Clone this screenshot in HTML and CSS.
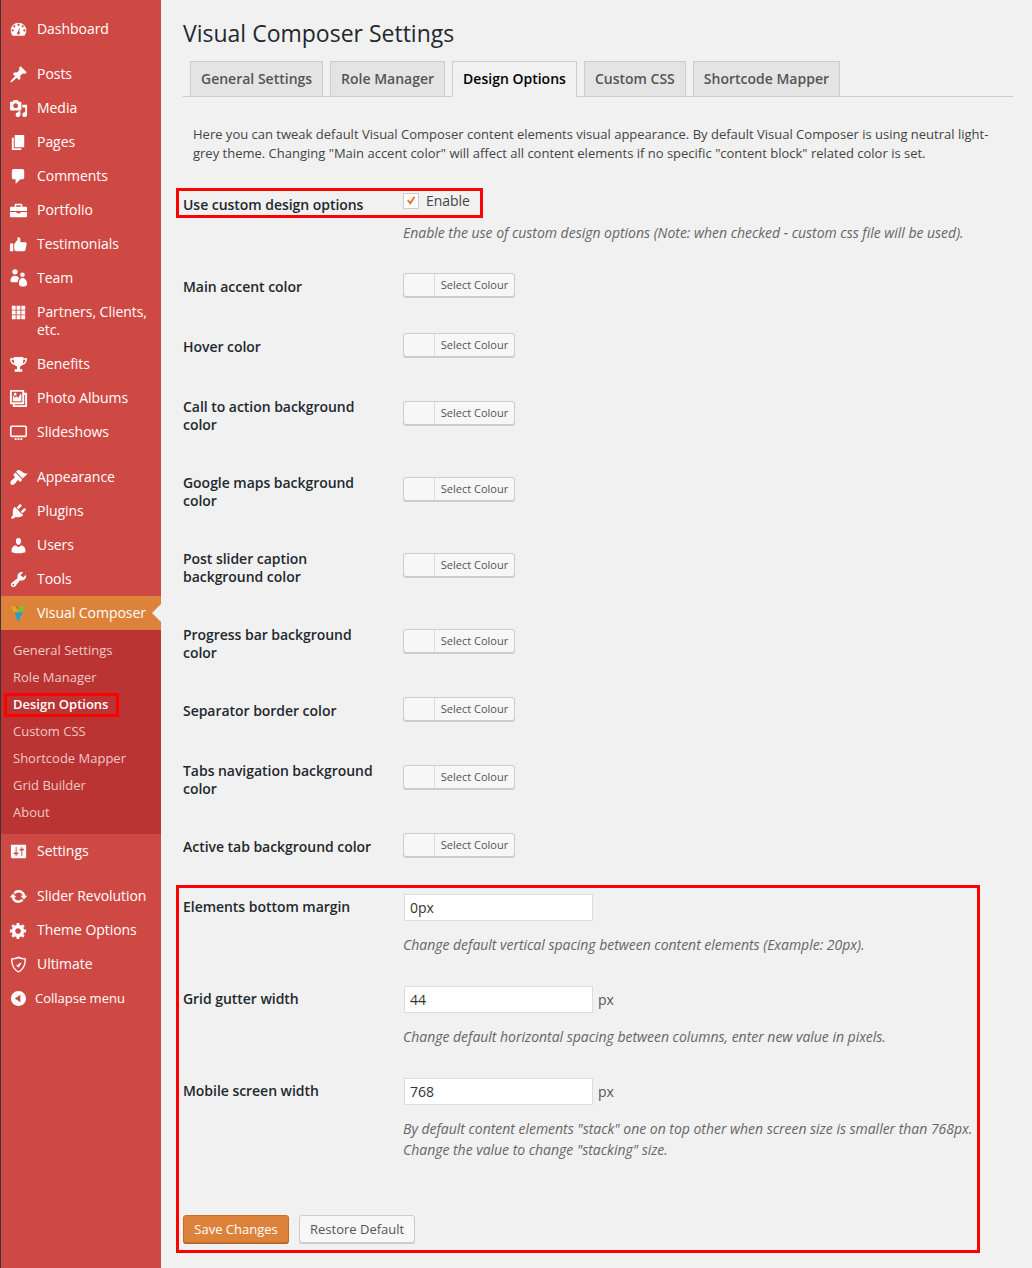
FILE: index.html
```html
<!DOCTYPE html>
<html lang="en">
<head>
    <meta charset="UTF-8">
    <title>Visual Composer Settings</title>
    <link rel="stylesheet" href="styles.css">
</head>
<body>
    <nav class="sidebar">
        <ul class="menu">
            <li class="item"><svg class="ico" viewBox="0 0 20 20"><path fill-rule="evenodd" d="M3.76 16.5h12.48A8 8 0 0 0 18.2 11 8.2 8.2 0 0 0 1.8 11a8 8 0 0 0 1.96 5.500zM10 3.800a1.200 1.200 0 1 1 0 2.400 1.200 1.200 0 0 1 0-2.400zM5.600 5.500a1.200 1.200 0 1 1 0 2.400 1.200 1.200 0 0 1 0-2.400zM14.400 5.500a1.200 1.200 0 1 1 0 2.400 1.200 1.200 0 0 1 0-2.400zM3.800 9.800a1.200 1.200 0 1 1 0 2.400 1.200 1.200 0 0 1 0-2.400zM16.200 9.800a1.200 1.200 0 1 1 0 2.400 1.200 1.200 0 0 1 0-2.400zM11.500 7.500l-.6 5a1.500 1.500 0 1 1-1.800 0z"/></svg>Dashboard</li>
            <li class="gap"></li>
            <li class="item"><svg class="ico" viewBox="0 0 20 20"><path d="M10.44 3.020l1.820-1.820 6.360 6.350-1.830 1.820c-1.050-.68-2.480-.57-3.410.36l-.75.75c-.92.93-1.040 2.350-.35 3.410l-1.830 1.820-2.410-2.410-2.800 2.790c-.42.42-3.380 2.710-3.800 2.290s1.860-3.390 2.280-3.810l2.790-2.790L4.100 9.360l1.830-1.820c1.050.69 2.480.57 3.400-.36l.75-.75c.93-.92 1.050-2.350.36-3.410z"/></svg>Posts</li>
            <li class="item"><svg class="ico" viewBox="0 0 20 20"><path fill-rule="evenodd" d="M13 11V4c0-.55-.45-1-1-1h-1.670L9 1H5L3.670 3H2c-.55 0-1 .45-1 1v7c0 .55.45 1 1 1h10c.55 0 1-.45 1-1zM7 4.500c1.380 0 2.500 1.120 2.500 2.500S8.380 9.500 7 9.500 4.500 8.380 4.500 7 5.620 4.500 7 4.500zM14 6h5v10.500c0 1.380-1.120 2.500-2.500 2.500S14 17.880 14 16.500s1.120-2.500 2.500-2.500c.17 0 .34.020.5.050V9h-3V6zm-4 8.050V13h2v3.500c0 1.380-1.120 2.500-2.500 2.500S7 17.880 7 16.500 8.120 14 9.500 14c.17 0 .34.020.5.050z"/></svg>Media</li>
            <li class="item"><svg class="ico" viewBox="0 0 20 20"><path d="M6 15V2h10v13H6zm-1 1h8v2H3V5h2v11z"/></svg>Pages</li>
            <li class="item"><svg class="ico" viewBox="0 0 20 20"><path d="M5 2h9c1.100 0 2 .9 2 2v7c0 1.100-.9 2-2 2h-2l-5 5v-5H5c-1.100 0-2-.9-2-2V4c0-1.100.9-2 2-2z"/></svg>Comments</li>
            <li class="item"><svg class="ico" viewBox="0 0 20 20"><path fill-rule="evenodd" d="M7 3h6a1 1 0 0 1 1 1v2h4a1 1 0 0 1 1 1v3.500H1V7a1 1 0 0 1 1-1h4V4a1 1 0 0 1 1-1zm.5 1.500V6h5V4.500h-5zM1 11.500h7V13h4v-1.500h7V16a1 1 0 0 1-1 1H2a1 1 0 0 1-1-1v-4.500z"/></svg>Portfolio</li>
            <li class="item"><svg class="ico" viewBox="0 0 20 20"><path d="M1 9h3.500v8H1zM5.500 9.500L9 5V2c1.800 0 3 1 3 3v2.500h5c1.200 0 1.900 1 1.600 2l-1.400 6.200c-.2.8-.9 1.300-1.700 1.300H8c-1.300 0-2.500-1-2.500-2.500z"/></svg>Testimonials</li>
            <li class="item"><svg class="ico" viewBox="0 0 20 20"><path d="M6.300.2a2.800 2.800 0 1 1 0 5.600 2.800 2.800 0 0 1 0-5.600zM14.200 3.600a2.400 2.400 0 1 1 0 4.800 2.400 2.400 0 0 1 0-4.800zM1.600 12c0-3 2-5 4.600-5s4.200 1.500 4.500 3c-1 1-1.500 2.500-1.500 4H3c-1 0-1.400-1-1.400-2zM10.500 16c0-4 1-6.500 3.700-6.500s4.800 2.500 4.800 6.500c0 1.500-2 2.500-4.300 2.500s-4.200-1-4.200-2.500z"/></svg>Team</li>
            <li class="item item-tall"><svg class="ico" viewBox="0 0 20 20"><path d="M3 3h4v4H3zM8 3h4v4H8zM13 3h4v4h-4zM3 8h4v4H3zM8 8h4v4H8zM13 8h4v4h-4zM3 13h4v4H3zM8 13h4v4H8zM13 13h4v4h-4z"/></svg><span>Partners, Clients, etc.</span></li>
            <li class="item"><svg class="ico" viewBox="0 0 20 20"><path fill-rule="evenodd" d="M5 2h10v1.500h4c0 4-1.500 6.500-5 7-.6.9-1.500 1.500-2.500 1.700V15H14v2.500H6V15h2.500v-2.800c-1-.2-1.900-.8-2.500-1.700-3.500-.5-5-3-5-7h4V2zM2.700 5c.2 2 1 3.300 2.700 3.800C5.100 7.700 5 6.400 5 5H2.700zM15 5c0 1.400-.1 2.700-.4 3.800 1.700-.5 2.500-1.800 2.700-3.800H15z"/></svg>Benefits</li>
            <li class="item"><svg class="ico" viewBox="0 0 20 20"><path fill-rule="evenodd" d="M16 4h1.960c.57 0 1.040.47 1.040 1.040v12.920c0 .57-.47 1.040-1.040 1.040H5.040C4.470 19 4 18.530 4 17.960V16H2.040C1.470 16 1 15.530 1 14.960V2.040C1 1.470 1.470 1 2.040 1h12.920c.57 0 1.040.47 1.040 1.040V4zM3 14h11V3H3v11zm5-8.500C8 4.670 7.330 4 6.500 4S5 4.670 5 5.500 5.670 7 6.500 7 8 6.330 8 5.500zm2 4.500s1-5 3-5v8H4V7c2 0 2 3 2 3s.33-2 2-2 2 2 2 2zm7 7V6h-1v8.960c0 .57-.47 1.040-1.040 1.040H6v1h11z"/></svg>Photo Albums</li>
            <li class="item"><svg class="ico" viewBox="0 0 20 20"><path fill-rule="evenodd" d="M3 2.500h14a2 2 0 0 1 2 2V13a2 2 0 0 1-2 2H3a2 2 0 0 1-2-2V4.500a2 2 0 0 1 2-2zM3 4.300a.3.3 0 0 0-.3.3v8.300a.3.3 0 0 0 .3.3h14a.3.3 0 0 0 .3-.3V4.600a.3.3 0 0 0-.3-.3H3zM6 16h2v2H6zM9 16h2v2H9zM12 16h2v2h-2z"/></svg>Slideshows</li>
            <li class="gap"></li>
            <li class="item"><svg class="ico" viewBox="0 0 20 20"><path d="M14.480 11.060L7.410 3.990l1.500-1.500c.5-.56 2.300-.47 3.510.32 1.210.8 1.430 1.280 2.910 2.100 1.180.64 2.450 1.260 4.450.85zm-.71.71L6.700 4.700 4.930 6.470c-.39.39-.39 1.020 0 1.410l1.060 1.060c.39.39.39 1.030 0 1.420-.6.6-1.430 1.110-2.210 1.690-.35.26-.7.53-1.010.84-1.340 1.340-1.810 3.270-.77 4.310s2.960.57 4.310-.77c.31-.31.58-.66.84-1.010.58-.78 1.090-1.610 1.690-2.210.39-.39 1.020-.39 1.410 0l1.060 1.060c.39.39 1.020.39 1.410 0z"/></svg>Appearance</li>
            <li class="item"><svg class="ico" viewBox="0 0 20 20"><path d="M13.110 4.360L9.870 7.600 8 5.730l3.240-3.240c.35-.34 1.050-.2 1.560.32.52.51.66 1.210.31 1.550zm-8 1.770l.91-1.120 9.010 9.010-1.190.84c-.71.71-2.630 1.160-3.820 1.160H6.140L4.900 17.260c-.59.59-1.540.59-2.120 0-.59-.58-.59-1.530 0-2.120l1.240-1.240v-3.880c0-1.130.4-3.190 1.090-3.890zm7.260 3.970l3.240-3.240c.34-.35 1.040-.21 1.550.31.52.51.66 1.210.31 1.550l-3.240 3.250z"/></svg>Plugins</li>
            <li class="item"><svg class="ico" viewBox="0 0 20 20"><path d="M10 9.250c-2.270 0-2.730-3.440-2.730-3.440C7 4.020 7.820 2 9.970 2c2.160 0 2.980 2.020 2.710 3.810 0 0-.41 3.440-2.680 3.440zm0 2.570L12.720 10c2.390 0 4.520 2.330 4.520 4.530v2.490s-3.650 1.130-7.240 1.130c-3.650 0-7.240-1.130-7.240-1.130v-2.490c0-2.250 1.940-4.480 4.470-4.480z"/></svg>Users</li>
            <li class="item"><svg class="ico" viewBox="0 0 20 20"><path fill-rule="evenodd" d="M16.680 9.770c-1.340 1.340-3.300 1.670-4.950.99l-5.410 6.520c-.99.99-2.590.99-3.580 0s-.99-2.590 0-3.570l6.520-5.420c-.68-1.650-.35-3.610.99-4.950 1.280-1.280 3.120-1.620 4.720-1.060l-2.890 2.890 2.820 2.820 2.860-2.870c.53 1.580.18 3.390-1.080 4.650zM3.810 16.210c.4.39 1.040.39 1.430 0 .4-.4.4-1.040 0-1.430-.39-.4-1.030-.4-1.430 0-.39.39-.39 1.030 0 1.430z"/></svg>Tools</li>
            <li class="item item-current"><svg class="ico" viewBox="0 0 20 20"><path fill="#efa522" d="M2 2.500h6l1.500 5.500-4 1z"/><path fill="#dd5a2c" d="M6.500 2.500H10L9 6z"/><path fill="#7fbb3a" d="M10 2.500h7.500L14 9h-4.500z"/><path fill="#1c9fdc" d="M6 9h9l-4 5v4.500l-3-3z"/></svg>Visual Composer</li>
            <li class="submenu">
                <ul>
                    <li class="sub-item">General Settings</li>
                    <li class="sub-item">Role Manager</li>
                    <li class="sub-item sub-current">Design Options</li>
                    <li class="sub-item">Custom CSS</li>
                    <li class="sub-item">Shortcode Mapper</li>
                    <li class="sub-item">Grid Builder</li>
                    <li class="sub-item">About</li>
                </ul>
            </li>
            <li class="item"><svg class="ico" viewBox="0 0 20 20"><path fill-rule="evenodd" d="M18 16V4c0-.55-.45-1-1-1H3c-.55 0-1 .45-1 1v12c0 .55.45 1 1 1h14c.55 0 1-.45 1-1zM8 11h1c.55 0 1 .45 1 1s-.45 1-1 1H8v1.500c0 .28-.22.5-.5.5s-.5-.22-.5-.5V13H6c-.55 0-1-.45-1-1s.45-1 1-1h1V5.500c0-.28.22-.5.5-.5s.5.22.5.5V11zm5-2h-1c-.55 0-1-.45-1-1s.45-1 1-1h1V5.500c0-.28.22-.5.5-.5s.5.22.5.5V7h1c.55 0 1 .45 1 1s-.45 1-1 1h-1v5.500c0 .28-.22.5-.5.5s-.5-.22-.5-.5V9z"/></svg>Settings</li>
            <li class="gap"></li>
            <li class="item"><svg class="ico" viewBox="0 0 20 20"><path d="M10.200 3.280c3.530 0 6.430 2.610 6.920 6h2.080l-3.500 4-3.500-4h2.320c-.45-1.970-2.210-3.450-4.320-3.450-1.450 0-2.730.71-3.540 1.780L4.950 5.660C6.230 4.200 8.110 3.280 10.200 3.280zm-.4 13.440c-3.520 0-6.430-2.610-6.920-6H.8l3.500-4c1.170 1.330 2.330 2.670 3.500 4H5.480c.45 1.970 2.210 3.450 4.320 3.450 1.450 0 2.730-.71 3.540-1.780l1.710 1.950c-1.280 1.460-3.150 2.380-5.250 2.380z"/></svg>Slider Revolution</li>
            <li class="item"><svg class="ico" viewBox="0 0 20 20"><path fill-rule="evenodd" d="M18 12h-2.180c-.17.7-.44 1.350-.81 1.930l1.540 1.540-2.100 2.100-1.540-1.540c-.58.36-1.230.63-1.910.79V19H8v-2.180c-.68-.16-1.330-.43-1.910-.79l-1.540 1.540-2.120-2.120 1.540-1.540c-.36-.58-.63-1.230-.79-1.910H1V9.030h2.170c.16-.7.44-1.350.8-1.940L2.430 5.550l2.100-2.100 1.540 1.540c.58-.37 1.240-.64 1.930-.81V2h3v2.180c.68.16 1.330.43 1.910.79l1.540-1.540 2.120 2.120-1.540 1.540c.36.59.64 1.240.8 1.940H18V12zm-8.500 1.500c1.660 0 3-1.340 3-3s-1.340-3-3-3-3 1.340-3 3 1.340 3 3 3z"/></svg>Theme Options</li>
            <li class="item"><svg class="ico" viewBox="0 0 20 20"><path fill-rule="evenodd" d="M10 1.500c2.500 1.300 5 1.900 7.800 1.900.3 6.500-1.900 12-7.800 15.100C4.100 15.400 1.900 9.900 2.200 3.400c2.800 0 5.300-.6 7.800-1.900zM10 3.300C8 4.200 6 4.700 3.700 4.800c0 5.400 1.700 9.800 6.300 12.300 4.600-2.500 6.300-6.900 6.300-12.300C14 4.700 12 4.200 10 3.300zM7 9.500l2 1.500 1.500-2 3-1-3 5H9z"/></svg>Ultimate</li>
            <li class="item item-collapse"><svg class="ico" viewBox="0 0 20 20"><path fill-rule="evenodd" d="M10 2.160c4.330 0 7.840 3.510 7.840 7.840s-3.510 7.840-7.840 7.840S2.160 14.330 2.160 10 5.710 2.160 10 2.160zm2 11.720V6.120L6.180 9.970z"/></svg>Collapse menu</li>
        </ul>
    </nav>

    <main class="content">
        <h1>Visual Composer Settings</h1>
        <div class="tabs">
            <a class="tab">General Settings</a>
            <a class="tab">Role Manager</a>
            <a class="tab tab-active">Design Options</a>
            <a class="tab">Custom CSS</a>
            <a class="tab">Shortcode Mapper</a>
        </div>

        <p class="intro">Here you can tweak default Visual Composer content elements visual appearance. By default Visual Composer is using neutral light-grey theme. Changing "Main accent color" will affect all content elements if no specific "content block" related color is set.</p>

        <div class="row row-enable">
            <div class="row-label">Use custom design options</div>
            <div class="row-field">
                <label class="check"><span class="check-box"><svg viewBox="0 0 16 16"><path d="M3.500 7.500l1.300-1.200L7 8.500l4.300-6 1.700 1.200-5.800 8.800z"/></svg></span>Enable</label>
                <p class="hint hint-enable">Enable the use of custom design options (Note: when checked - custom css file will be used).</p>
            </div>
        </div>

        <div class="row">
            <div class="row-label">Main accent color</div>
            <div class="field-colour"><button class="colour"><span class="swatch"></span><span class="colour-text">Select Colour</span></button></div>
        </div>
        <div class="row">
            <div class="row-label">Hover color</div>
            <div class="field-colour"><button class="colour"><span class="swatch"></span><span class="colour-text">Select Colour</span></button></div>
        </div>
        <div class="row">
            <div class="row-label">Call to action background color</div>
            <div class="field-colour"><button class="colour"><span class="swatch"></span><span class="colour-text">Select Colour</span></button></div>
        </div>
        <div class="row">
            <div class="row-label">Google maps background color</div>
            <div class="field-colour"><button class="colour"><span class="swatch"></span><span class="colour-text">Select Colour</span></button></div>
        </div>
        <div class="row">
            <div class="row-label">Post slider caption background color</div>
            <div class="field-colour"><button class="colour"><span class="swatch"></span><span class="colour-text">Select Colour</span></button></div>
        </div>
        <div class="row">
            <div class="row-label">Progress bar background color</div>
            <div class="field-colour"><button class="colour"><span class="swatch"></span><span class="colour-text">Select Colour</span></button></div>
        </div>
        <div class="row">
            <div class="row-label">Separator border color</div>
            <div class="field-colour"><button class="colour"><span class="swatch"></span><span class="colour-text">Select Colour</span></button></div>
        </div>
        <div class="row">
            <div class="row-label">Tabs navigation background color</div>
            <div class="field-colour"><button class="colour"><span class="swatch"></span><span class="colour-text">Select Colour</span></button></div>
        </div>
        <div class="row">
            <div class="row-label">Active tab background color</div>
            <div class="field-colour"><button class="colour"><span class="swatch"></span><span class="colour-text">Select Colour</span></button></div>
        </div>

        <div class="spacing">
            <div class="row row-input">
                <div class="row-label">Elements bottom margin</div>
                <div class="row-field">
                    <input class="text-input" type="text" value="0px">
                    <p class="hint">Change default vertical spacing between content elements (Example: 20px).</p>
                </div>
            </div>
            <div class="row row-input">
                <div class="row-label">Grid gutter width</div>
                <div class="row-field">
                    <input class="text-input" type="text" value="44"><span class="unit">px</span>
                    <p class="hint">Change default horizontal spacing between columns, enter new value in pixels.</p>
                </div>
            </div>
            <div class="row row-input">
                <div class="row-label">Mobile screen width</div>
                <div class="row-field">
                    <input class="text-input" type="text" value="768"><span class="unit">px</span>
                    <p class="hint">By default content elements "stack" one on top other when screen size is smaller than 768px.<br>Change the value to change "stacking" size.</p>
                </div>
            </div>
            <div class="actions">
                <button class="btn btn-save">Save Changes</button>
                <button class="btn btn-restore">Restore Default</button>
            </div>
        </div>
    </main>
</body>
</html>
```

FILE: styles.css
```css
* { box-sizing: border-box; }
*::after { box-sizing: border-box; }
html, body { margin: 0; padding: 0; }
body { display: flex; min-height: 1268px; background: #f1f1f1; color: #444; font-family: "Open Sans", sans-serif; font-size: 14px; letter-spacing: -.04px; }
ul { list-style: none; margin: 0; padding: 0; }
p { margin: 0; }

/* sidebar */
.sidebar { flex: 0 0 161px; padding-top: 12px; background: #cf4944; border-left: 1px solid #3a3436; color: #fff; }
.item { position: relative; display: flex; align-items: center; height: 34px; padding-left: 8px; line-height: 18px; }
.item-tall { align-items: flex-start; height: 52px; padding-top: 8px; }
.item-tall span { width: 118px; }
.gap { height: 11px; }
.ico { flex: 0 0 19px; width: 19px; height: 19px; margin-right: 9px; fill: #fff; }
.item-current { background: #dd823b; }
.item-current::after { content: ""; position: absolute; right: 0; top: 8px; border: 9px solid transparent; border-right-color: #f1f1f1; border-left-width: 0; }
.item-collapse { font-size: 13px; letter-spacing: 0; }
.item-collapse .ico { margin-right: 7px; }
.submenu { padding: 7px 0 8px; background: #b93433; }
.sub-item { height: 27px; padding-left: 12px; font-size: 13px; line-height: 27px; letter-spacing: 0; color: #efc9c7; }
.sub-current { position: relative; color: #fff; font-weight: 600; }
.sub-current::after { content: ""; position: absolute; left: 3px; top: 2px; width: 115px; height: 24px; border: 3px solid #f00; }

/* main */
.content { flex: 1; padding: 0 19px 0 22px; }
h1 { margin: 0; padding-top: 16px; padding-bottom: 1px; font-size: 23px; font-weight: 400; line-height: 34px; letter-spacing: 0; color: #23282d; }
.tabs { display: flex; gap: 7px; height: 36px; margin-top: 10px; padding-left: 7px; border-bottom: 1px solid #ccc; }
.tab { height: 36px; padding: 0 10px; background: #e4e4e4; border: 1px solid #ccc; font-weight: 600; line-height: 34px; letter-spacing: 0; color: #555; }
.tab-active { background: #f1f1f1; border-bottom-color: #f1f1f1; color: #000; }
.intro { padding: 28px 10px 0; font-size: 13px; line-height: 19px; letter-spacing: 0; color: #444; }

/* form rows */
.row { display: flex; min-height: 60px; }
.row-label { flex: 0 0 220px; padding: 20px 20px 20px 0; font-weight: 600; line-height: 18px; color: #23282d; }
.row-field { padding-top: 15px; }
.field-colour { align-self: center; height: 30px; }
.row-enable { position: relative; height: 82px; margin-top: 13px; }
.row-enable::after { content: ""; position: absolute; left: -7px; top: 12px; width: 307px; height: 30px; border: 3px solid #f00; }
.check { display: flex; align-items: center; height: 19px; color: #444; }
.check-box { width: 16px; height: 16px; margin-right: 7px; background: #fff; border: 1px solid #ccc; }
.check-box svg { display: block; width: 14px; height: 14px; fill: #e8762c; }
.hint { font-style: italic; line-height: 21px; letter-spacing: -.02px; color: #666; }
.hint-enable { margin-top: 12px; }

.colour { display: flex; width: 112px; height: 24px; padding: 0; background: #f7f7f7; border: 1px solid #ccc; border-radius: 3px; box-shadow: 0 1px 0 #ccc; font: inherit; letter-spacing: 0; }
.swatch { width: 31px; height: 100%; border-right: 1px solid #ddd; }
.colour-text { flex: 1; font-size: 11px; line-height: 22px; color: #555; text-align: center; }

.spacing { position: relative; }
.spacing::after { content: ""; position: absolute; left: -7px; top: 7px; width: 804px; height: 368px; border: 3px solid #f00; pointer-events: none; }
.row-input { height: 92px; }
.text-input { width: 189px; height: 27px; margin: 1px 0 0 1px; padding: 0 5px; background: #fff; border: 1px solid #ddd; font: inherit; color: #333; }
.unit { margin-left: 5px; color: #555; }
.row-input .hint { margin-top: 13px; }
.actions { display: flex; gap: 10px; margin-top: 61px; }
.btn { height: 28px; padding: 0 10px; border: 1px solid #ccc; border-radius: 3px; font: inherit; font-size: 13px; letter-spacing: 0; }
.btn-save { width: 106px; background: #dd823b; border-color: #c46d2b; box-shadow: 0 1px 0 #b5632a; color: #fff; }
.btn-restore { background: #f7f7f7; box-shadow: 0 1px 0 #ccc; color: #555; }
```
